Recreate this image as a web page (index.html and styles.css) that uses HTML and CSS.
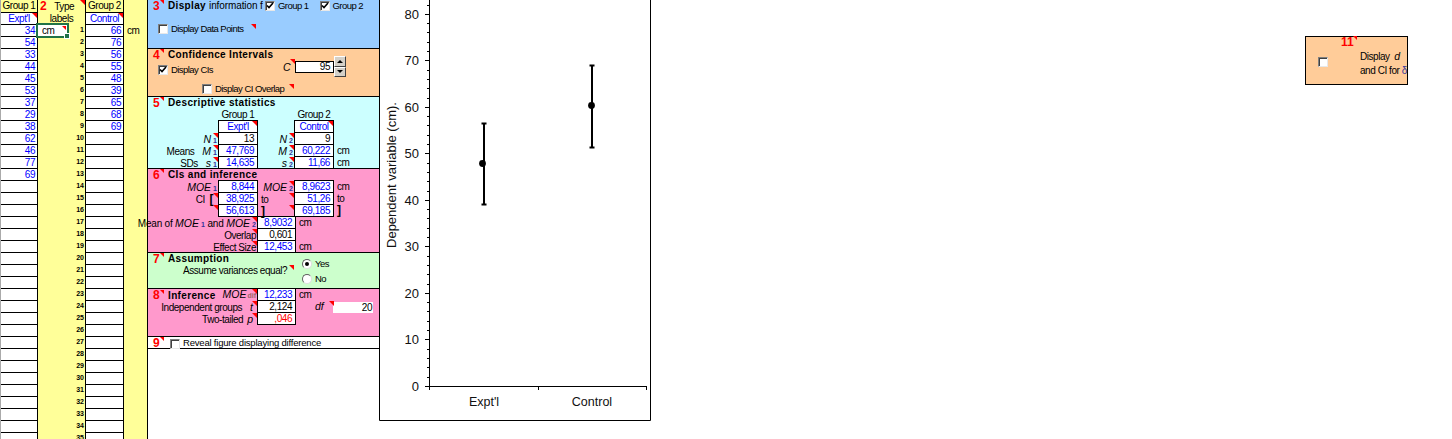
FILE: index.html
```html
<!DOCTYPE html>
<html lang="en">
<head>
  <meta charset="UTF-8" />
  <title>Data Two Sample</title>
  <link rel="stylesheet" href="styles.css">
</head>
<body>

  <div class="sheet">
    <div class="col col-a">
      <div class="top-cell">Group 1</div>
      <div class="name-cell note">Expt'l</div>
      <div class="data">
        <div>34</div><div>54</div><div>33</div><div>44</div><div>45</div><div>53</div><div>37</div>
        <div>29</div><div>38</div><div>62</div><div>46</div><div>77</div><div>69</div>
      </div>
    </div>

    <div class="col col-b">
      <div class="type-cell note"><span class="red-num">2</span>Type</div>
      <div class="labels-cell">labels</div>
      <div class="selected note">cm<span class="handle"></span></div>
      <div class="index">
        <div>1</div><div>2</div><div>3</div><div>4</div><div>5</div><div>6</div><div>7</div><div>8</div><div>9</div>
        <div>10</div><div>11</div><div>12</div><div>13</div><div>14</div><div>15</div><div>16</div><div>17</div><div>18</div>
        <div>19</div><div>20</div><div>21</div><div>22</div><div>23</div><div>24</div><div>25</div><div>26</div><div>27</div>
        <div>28</div><div>29</div><div>30</div><div>31</div><div>32</div><div>33</div><div>34</div><div>35</div>
      </div>
    </div>

    <div class="col col-c">
      <div class="top-cell">Group 2</div>
      <div class="name-cell note">Control</div>
      <div class="data">
        <div>66</div><div>76</div><div>56</div><div>55</div><div>48</div><div>39</div><div>65</div><div>68</div><div>69</div>
      </div>
    </div>

    <div class="col col-d">
      <div class="unit-cell">cm</div>
    </div>
  </div>

  <div class="panels">
    <section class="sec blue h49">
      <div class="head">
        <span class="num note">3</span><b class="title">Display</b>
        <span class="info">information f</span>
        <span class="box"><svg viewBox="0 0 8 8"><path d="M1 3.5l2 2 4-4.5"/></svg></span><span class="opt-text">Group 1</span>
        <span class="box second"><svg viewBox="0 0 8 8"><path d="M1 3.5l2 2 4-4.5"/></svg></span><span class="opt-text">Group 2</span>
      </div>
      <div class="points">
        <span class="box"></span><span class="opt-text">Display Data Points</span><span class="flag"></span>
      </div>
    </section>

    <section class="sec orange h48">
      <div class="head short"><span class="num note">4</span><b class="title">Confidence Intervals</b></div>
      <div class="ci-row">
        <div class="ci-check">
          <span class="box"><svg viewBox="0 0 8 8"><path d="M1 3.5l2 2 4-4.5"/></svg></span><span class="opt-text">Display CIs</span>
        </div>
        <span class="sym ci-sym note">C</span>
        <div class="ci-input">95</div>
        <div class="spin">
          <span class="spin-btn"><i class="up"></i></span>
          <span class="spin-btn"><i class="down"></i></span>
        </div>
      </div>
      <div class="overlap">
        <span class="box"></span><span class="opt-text">Display CI Overlap</span><span class="flag"></span>
      </div>
    </section>

    <section class="sec cyan h72">
      <div class="head"><span class="num note">5</span><b class="title">Descriptive statistics</b></div>
      <div class="stat">
        <span></span><span class="center">Group 1</span><span></span><span class="center">Group 2</span>
      </div>
      <div class="stat">
        <span></span><span class="val top note center">Expt'l</span><span></span><span class="val top note center">Control</span>
      </div>
      <div class="stat">
        <span class="lab note"><i class="sym">N</i><sub>1</sub></span><span class="val plain">13</span>
        <span class="lab note"><i class="sym">N</i><sub>2</sub></span><span class="val plain">9</span>
      </div>
      <div class="stat">
        <span class="lab note">Means<i class="sym gap">M</i><sub>1</sub></span><span class="val">47,769</span>
        <span class="lab note"><i class="sym">M</i><sub>2</sub></span><span class="val">60,222</span><span class="unit">cm</span>
      </div>
      <div class="stat">
        <span class="lab note">SDs<i class="sym gap">s</i><sub>1</sub></span><span class="val">14,635</span>
        <span class="lab note"><i class="sym">s</i><sub>2</sub></span><span class="val">11,66</span><span class="unit">cm</span>
      </div>
    </section>

    <section class="sec pink h84">
      <div class="head"><span class="num note">6</span><b class="title">CIs and inference</b></div>
      <div class="stat">
        <span class="lab"><i class="sym">MOE</i><sub>1</sub></span><span class="val top">8,844</span>
        <span class="lab note"><i class="sym">MOE</i><sub>2</sub></span><span class="val top">8,9623</span><span class="unit">cm</span>
      </div>
      <div class="stat">
        <span class="lab note ci-lab">CI&nbsp;&nbsp;<b class="bracket">[</b></span><span class="val">38,925</span>
        <span class="lab note to">to</span><span class="val">51,26</span><span class="unit">to</span>
      </div>
      <div class="stat">
        <span class="lab note"></span><span class="val">56,613</span>
        <span class="lab note to"><b class="bracket">]</b></span><span class="val">69,185</span><span class="unit"><b class="bracket">]</b></span>
      </div>
      <div class="stat wide">
        <span class="lab note mean-lab">Mean of&nbsp;<i class="sym">MOE</i><sub>1</sub>&nbsp;and&nbsp;<i class="sym">MOE</i><sub>2</sub></span><span class="val top">8,9032</span><span class="unit">cm</span>
      </div>
      <div class="stat wide">
        <span class="lab note">Overlap</span><span class="val plain">0,601</span>
      </div>
      <div class="stat wide">
        <span class="lab note">Effect Size</span><span class="val">12,453</span><span class="unit">cm</span>
      </div>
    </section>

    <section class="sec green h36">
      <div class="assume">
        <div class="head"><span class="num note">7</span><b class="title">Assumption</b></div>
        <div class="assume-text note">Assume variances equal?</div>
      </div>
      <div class="radios">
        <div class="radio-row"><span class="radio on"></span><span class="opt-text">Yes</span></div>
        <div class="radio-row"><span class="radio"></span><span class="opt-text">No</span></div>
      </div>
    </section>

    <section class="sec pink h48">
      <div class="stat wide">
        <span class="lab note infer-lab">
          <span class="head-inline"><span class="num note">8</span><b class="title">Inference</b></span>
          <span class="moe-dif"><i class="sym">MOE</i><sub class="dif">dif</sub></span>
        </span>
        <span class="val">12,233</span><span class="unit">cm</span>
      </div>
      <div class="stat wide">
        <span class="lab note side-lab">Independent groups<i class="sym gap">t</i></span><span class="val plain">2,124</span>
        <span class="df note"><i class="sym">df</i></span><span class="df-val">20</span>
      </div>
      <div class="stat wide">
        <span class="lab note side-lab">Two-tailed<i class="sym gap-s">p</i></span><span class="val red">,046</span>
      </div>
    </section>

    <section class="sec white h12">
      <div class="head">
        <span class="num note">9</span>
        <span class="box reveal"></span><span class="opt-text reveal-text">Reveal figure displaying difference</span>
      </div>
    </section>
  </div>

  <svg class="chart" width="272" height="421" viewBox="0 0 272 421">
    <path class="frame" d="M.5 0V420.5H271.5V0"/>
    <path class="frame" d="M50.5 0V386.5H267.5M159.5 386V390M267.5 386V390M50.5 386V390"/>
    <path class="frame" d="M46 386.5h4M46 339.5h4M46 293.5h4M46 246.5h4M46 200.5h4M46 153.5h4M46 107.5h4M46 60.5h4M46 14.5h4"/>
    <path class="frame" d="M48 377.5h2M48 367.5h2M48 358.5h2M48 349.5h2M48 330.5h2M48 321.5h2M48 311.5h2M48 302.5h2M48 284.5h2M48 274.5h2M48 265.5h2M48 256.5h2M48 237.5h2M48 228.5h2M48 218.5h2M48 209.5h2M48 191.5h2M48 181.5h2M48 172.5h2M48 163.5h2M48 144.5h2M48 135.5h2M48 125.5h2M48 116.5h2M48 98.5h2M48 88.5h2M48 79.5h2M48 70.5h2M48 51.5h2M48 42.5h2M48 32.5h2M48 23.5h2M48 5.5h2"/>

    <text class="tick" x="40" y="391">0</text>
    <text class="tick" x="40" y="344">10</text>
    <text class="tick" x="40" y="298">20</text>
    <text class="tick" x="40" y="251">30</text>
    <text class="tick" x="40" y="205">40</text>
    <text class="tick" x="40" y="158">50</text>
    <text class="tick" x="40" y="112">60</text>
    <text class="tick" x="40" y="65">70</text>
    <text class="tick" x="40" y="19">80</text>

    <text class="axis-title" transform="translate(17 175) rotate(-90)">Dependent variable (cm).</text>
    <text class="cat" x="105" y="406">Expt'l</text>
    <text class="cat" x="213" y="406">Control</text>

    <path class="bar" d="M105 123V205M102.5 123.5h5M102.5 204.5h5"/>
    <circle cx="103.5" cy="163.5" r="3.4"/>
    <path class="bar" d="M213 65V148M210.5 65.5h5M210.5 147.5h5"/>
    <circle cx="212.5" cy="105.5" r="3.4"/>
  </svg>

  <div class="fig-toggle">
    <div class="fig-num note">11</div>
    <span class="box fig-box"></span>
    <div class="fig-text">
      <div>Display&nbsp;&nbsp;<i class="sym">d</i></div>
      <div>and CI for <span class="delta">δ</span></div>
    </div>
  </div>

</body>
</html>
```

FILE: styles.css
```css
* {
  box-sizing: border-box;
}

html, body {
  height: 439px;
  overflow: hidden;
}

body {
  margin: 0;
  display: flex;
  align-items: flex-start;
  background-color: white;
  color: #000;
  font-family: 'Liberation Sans', sans-serif;
  font-size: 10px;
  letter-spacing: -0.45px;
  line-height: 12px;
}

/* comment marker, the small red corner */
.note {
  position: relative;
}

.note::after {
  content: "";
  position: absolute;
  top: 0;
  right: 0;
  border-top: 5px solid #f00;
  border-left: 5px solid transparent;
}

.flag {
  width: 0;
  height: 0;
  border-top: 5px solid #f00;
  border-left: 5px solid transparent;
}

/* left hand data columns */
.sheet {
  display: flex;
  flex: none;
  width: 147px;
  height: 439px;
  background-color: #ffff99;
}

.col {
  height: 439px;
  border-right: 1px solid #000;
}

.col-a {
  width: 38px;
  border-left: 1px solid #aaa;
}

.col-b {
  position: relative;
  width: 48px;
}

.col-c {
  width: 38px;
}

.col-d {
  width: 23px;
  border-right: none;
}

.top-cell {
  height: 13px;
  border-bottom: 1px solid #000;
  text-align: center;
}

.name-cell {
  height: 12px;
  border-bottom: 1px solid #000;
  background-color: white;
  color: #00f;
  text-align: center;
}

.data {
  height: 414px;
  padding-right: 2px;
  background: repeating-linear-gradient(to bottom, #fff 0 11px, #000 11px 12px);
  color: #00f;
  text-align: right;
}

.data div {
  height: 12px;
  line-height: 11px;
}

.type-cell {
  height: 13px;
  padding-left: 2px;
  text-align: left;
}

.type-cell .red-num {
  margin-right: 8px;
  color: #f00;
  font-size: 12px;
  font-weight: bold;
}

.labels-cell {
  height: 11px;
  text-align: center;
}

.selected {
  position: absolute;
  top: 23px;
  left: -2px;
  width: 33px;
  height: 15px;
  padding-left: 4px;
  border: 2px solid #217346;
  background-color: white;
  line-height: 11px;
}

.selected::after {
  top: 1px;
  right: 1px;
  border-top-width: 4px;
  border-left-width: 4px;
}

.handle {
  position: absolute;
  right: -3px;
  bottom: -3px;
  width: 6px;
  height: 6px;
  border: 1px solid white;
  background-color: #217346;
}

.index {
  padding-right: 1px;
  font-size: 7px;
  font-weight: bold;
  letter-spacing: 0;
  text-align: right;
}

.index div {
  height: 12px;
  line-height: 12px;
}

.unit-cell {
  padding: 25px 0 0 3px;
}

/* numbered panels */
.panels {
  flex: none;
  width: 232px;
  height: 439px;
  border-left: 1px solid #000;
}

.sec {
  border-bottom: 1px solid #000;
}

.h12 { height: 12px; }
.h36 { height: 36px; }
.h48 { height: 48px; }
.h49 { height: 49px; }
.h72 { height: 72px; }
.h84 { height: 84px; }

.blue { background-color: #99ccff; }
.orange { background-color: #ffcc99; }
.cyan { background-color: #ccffff; }
.pink { background-color: #ff99cc; }
.green { background-color: #ccffcc; }
.white { background-color: white; }

.head {
  display: flex;
  align-items: center;
  height: 12px;
}

.head.short {
  height: 7px;
  padding-top: 4px;
}

.head-inline {
  display: flex;
  align-items: center;
  margin-right: auto;
}

.num {
  flex: none;
  width: 11px;
  margin-left: 5px;
  color: #f00;
  font-size: 12px;
  font-weight: bold;
  letter-spacing: 0;
  text-align: left;
}

.num::after {
  border-top-width: 4px;
  border-left-width: 4px;
}

.title {
  margin-left: 4px;
  font-size: 10px;
  letter-spacing: 0.35px;
  white-space: nowrap;
}

.info {
  flex: none;
  width: 56px;
  margin-left: 3px;
  letter-spacing: -0.1px;
  white-space: nowrap;
}

.box {
  display: block;
  flex: none;
  width: 10px;
  height: 10px;
  border: 1px solid;
  border-color: #808080 #e8e8e8 #e8e8e8 #808080;
  box-shadow: inset 1px 1px 0 #404040;
  background-color: white;
}

.box svg {
  display: block;
  width: 8px;
  height: 8px;
  fill: none;
  stroke: #000;
  stroke-width: 1.6;
}

.box.second {
  margin-left: 11px;
}

.opt-text {
  margin-left: 3px;
  font-size: 9.5px;
  letter-spacing: -0.55px;
  white-space: nowrap;
}

.points {
  display: flex;
  align-items: center;
  padding: 11px 0 0 10px;
}

.points .flag {
  margin: -6px 0 0 8px;
}

.ci-row {
  display: flex;
  height: 21px;
}

.ci-check {
  display: flex;
  align-items: center;
  width: 124px;
  height: 10px;
  margin: 9px 0 0 10px;
}

.sym {
  font-style: italic;
  font-size: 10.5px;
  letter-spacing: 0;
}

.gap {
  margin-left: 8px;
}

.gap-s {
  margin-left: 4px;
}

.ci-sym {
  width: 12px;
  height: 12px;
  margin: 5px 0 0 1px;
}

.ci-sym::after {
  top: -2px;
  right: 0;
}

.ci-input {
  width: 39px;
  height: 12px;
  margin-top: 5px;
  padding-right: 3px;
  border: 1px solid #000;
  background-color: white;
  line-height: 10px;
  text-align: right;
}

.spin {
  display: flex;
  flex-direction: column;
  width: 12px;
}

.spin-btn {
  display: flex;
  align-items: center;
  justify-content: center;
  height: 10.5px;
  border: 1px solid;
  border-color: #fff #404040 #404040 #fff;
  background-color: #d4d0c8;
}

.up {
  border: 3px solid transparent;
  border-top: none;
  border-bottom-color: #000;
}

.down {
  border: 3px solid transparent;
  border-bottom: none;
  border-top-color: #000;
}

.overlap {
  display: flex;
  align-items: center;
  padding: 6px 0 0 54px;
}

.overlap .flag {
  margin: -6px 0 0 5px;
}

/* rows of output cells, columns line up between the panels */
.stat {
  display: grid;
  grid-template-columns: 70px 40px 36px 40px 45px;
  height: 12px;
  line-height: 11px;
}

.stat.wide {
  grid-template-columns: 109px 39px 36px 47px;
}

.center {
  text-align: center;
}

.lab {
  display: flex;
  justify-content: flex-end;
  align-items: center;
  padding-right: 1px;
  white-space: nowrap;
}

.lab.to {
  justify-content: flex-start;
  padding-left: 3px;
}

.lab.ci-lab {
  padding-right: 5px;
  white-space: pre;
}

.lab.side-lab {
  padding-right: 4px;
}

.lab.mean-lab {
  letter-spacing: -0.2px;
}

.lab sub {
  margin: 3px 0 0 2px;
  color: #333399;
  font-size: 7px;
  font-weight: bold;
  letter-spacing: 0;
  line-height: 7px;
}

.lab .dif {
  margin-left: 1px;
  color: #996666;
}

.infer-lab {
  justify-content: space-between;
}

.moe-dif {
  display: flex;
  align-items: center;
  margin-top: -2px;
}

.val {
  padding-right: 3px;
  border: 1px solid #000;
  border-top: none;
  background-color: white;
  color: #00f;
  text-align: right;
}

.val.center {
  padding: 0;
  text-align: center;
}

.val.top {
  box-shadow: 0 -1px 0 #000;
}

.val.plain {
  color: #000;
}

.val.red {
  color: #f00;
}

.unit {
  padding-left: 3px;
  white-space: nowrap;
}

.bracket {
  font-size: 12px;
}

.df {
  justify-self: end;
  width: 19px;
  margin-right: -2px;
}

.df-val {
  width: 40px;
  margin: 1px 0 0 1px;
  padding-right: 1px;
  background-color: white;
  text-align: right;
}

.green {
  display: flex;
}

.assume {
  width: 154px;
}

.assume-text {
  width: 146px;
  padding-left: 35px;
  white-space: nowrap;
}

.assume-text::after {
  top: 0;
}

.radios {
  padding-top: 6px;
}

.radio-row {
  display: flex;
  align-items: center;
  height: 10px;
  margin-bottom: 5px;
}

.radio {
  position: relative;
  width: 10px;
  height: 10px;
  border: 1px solid;
  border-color: #606060 #ddd #ddd #606060;
  border-radius: 50%;
  background-color: white;
}

.radio.on::after {
  content: "";
  position: absolute;
  top: 2px;
  left: 2px;
  width: 4px;
  height: 4px;
  border-radius: 50%;
  background-color: #000;
}

.reveal {
  margin: 1px 0 0 6px;
}

.reveal-text {
  letter-spacing: -0.2px;
}

/* chart */
.chart {
  display: block;
  flex: none;
  background-color: white;
  letter-spacing: 0;
}

.frame {
  fill: none;
  stroke: #000;
  stroke-width: 1;
}

.bar {
  fill: none;
  stroke: #000;
  stroke-width: 2;
}

.tick {
  font-size: 13px;
  text-anchor: end;
  fill: #111;
}

.cat {
  font-size: 12.5px;
  text-anchor: middle;
  fill: #111;
}

.axis-title {
  font-size: 13px;
  text-anchor: middle;
  fill: #111;
}

/* difference figure toggle, out on its own to the right */
.fig-toggle {
  display: flex;
  flex: none;
  position: relative;
  width: 103px;
  height: 49px;
  margin: 36px 0 0 654px;
  border: 1px solid #000;
  background-color: #ffcc99;
}

.fig-num {
  position: absolute;
  top: -1px;
  left: 35px;
  width: 16px;
  height: 12px;
  color: #f00;
  font-size: 12px;
  font-weight: bold;
  letter-spacing: 0;
}

.fig-num::after {
  border-top-width: 4px;
  border-left-width: 4px;
}

.fig-box {
  margin: 20px 0 0 12px;
}

.fig-text {
  margin: 12px 0 0 32px;
  line-height: 14px;
  white-space: nowrap;
}

.delta {
  color: #333399;
}
```
